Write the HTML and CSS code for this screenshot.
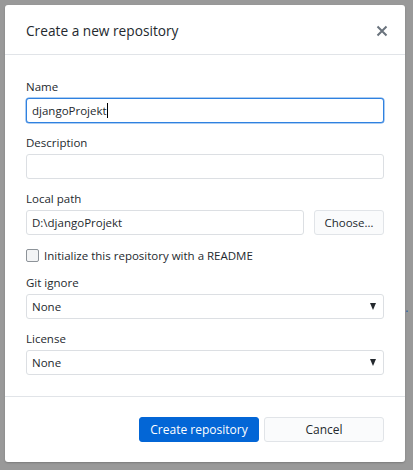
FILE: index.html
```html
<!DOCTYPE html>
<html>
<head>
<meta charset="utf-8">
<link rel="stylesheet" href="styles.css">
</head>
<body>
<div class="backdrop">
  <span class="peek">u.</span>
  <div class="dialog">
    <div class="header">
      <div class="title">Create a new repository</div>
      <svg class="close" width="12" height="12" viewBox="0 0 12 12"><path d="M1.5 1.5L10.5 10.5M10.5 1.5L1.5 10.5" stroke="#6a737d" stroke-width="2" stroke-linecap="butt"/></svg>
    </div>
    <div class="form">
      <div class="field first">
        <div class="label">Name</div>
        <div class="input focused"><span>djangoProjekt</span><span class="caret"></span></div>
      </div>
      <div class="field">
        <div class="label">Description</div>
        <div class="input"></div>
      </div>
      <div class="field">
        <div class="label">Local path</div>
        <div class="row">
          <div class="input grow">D:\djangoProjekt</div>
          <div class="btn choose">Choose…</div>
        </div>
      </div>
      <div class="check">
        <span class="box"></span>
        <span>Initialize this repository with a README</span>
      </div>
      <div class="field tight">
        <div class="label">Git ignore</div>
        <div class="input select"><span>None</span><span class="arrow"></span></div>
      </div>
      <div class="field">
        <div class="label">License</div>
        <div class="input select"><span>None</span><span class="arrow"></span></div>
      </div>
    </div>
    <div class="footer">
      <div class="btn primary">Create repository</div>
      <div class="btn cancel">Cancel</div>
    </div>
  </div>
</div>
</body>
</html>
```
FILE: styles.css
```css
html, body {
  margin: 0;
  padding: 0;
}
body {
  background: #999999;
  font-family: "Open Sans", "Noto Sans", sans-serif;
  color: #24292e;
  width: 413px;
  height: 470px;
  overflow: hidden;
}
.backdrop {
  position: relative;
  width: 413px;
  height: 470px;
  padding: 5px;
  box-sizing: border-box;
}
.dialog {
  position: relative;
  z-index: 1;
  width: 400px;
  height: 457px;
  background: #ffffff;
  border-radius: 3px;
  box-shadow: 0 1px 2px rgba(0,0,0,0.2);
  display: flex;
  flex-direction: column;
}
.header {
  border-bottom: 1px solid #e1e4e8;
  display: flex;
  align-items: center;
  justify-content: space-between;
  padding: 2px 17px 0 21px;
  height: 47px;
  flex: none;
}
.title {
  font-size: 13.7px;
  font-weight: 400;
  color: #24292e;
}
.close {
  display: block;
}
.form {
  padding: 24px 21px 0 21px;
  flex: 1;
  font-size: 11.5px;
}
.field {
  margin-top: 12px;
}
.field.first {
  margin-top: 0;
}
.field.tight {
  margin-top: 11px;
}
.label {
  line-height: 16px;
  height: 16px;
  margin-bottom: 3px;
  color: #24292e;
}
.input {
  height: 25px;
  box-sizing: border-box;
  border: 1px solid #dcdfe3;
  border-radius: 3px;
  padding: 0 5px;
  display: flex;
  align-items: center;
  line-height: 16px;
  color: #24292e;
  background: #fff;
}
.input.focused {
  border-color: #2f81e0;
  box-shadow: 0 0 0 0.5px #5b9be6;
}
.caret {
  display: inline-block;
  width: 1px;
  height: 15px;
  background: #000;
}
.row {
  display: flex;
  gap: 10px;
}
.grow {
  flex: 1;
}
.btn {
  height: 25px;
  box-sizing: border-box;
  border-radius: 3px;
  display: flex;
  align-items: center;
  justify-content: center;
  font-size: 11.5px;
}
.choose {
  width: 70px;
  border: 1px solid #e1e4e8;
  background: #fafbfc;
  color: #24292e;
}
.check {
  margin-top: 11px;
  height: 18px;
  display: flex;
  align-items: center;
  gap: 5px;
}
.box {
  width: 13px;
  height: 13px;
  box-sizing: border-box;
  border: 1px solid #8d9399;
  border-radius: 2px;
  background: #f3f4f5;
}
.select {
  justify-content: space-between;
  padding-right: 7px;
}
.arrow {
  width: 0;
  height: 0;
  border-left: 3.5px solid transparent;
  border-right: 3.5px solid transparent;
  border-top: 7px solid #24292e;
}
.footer {
  height: 66px;
  flex: none;
  box-sizing: border-box;
  border-top: 1px solid #e1e4e8;
  padding: 20px 21px 0 0;
  display: flex;
  justify-content: flex-end;
  gap: 5px;
}
.footer .btn {
  width: 120px;
  height: 25px;
  font-size: 12px;
}
.primary {
  background: #0366d6;
  color: #ffffff;
  border: 1px solid #0366d6;
}
.cancel {
  background: #fafbfc;
  border: 1px solid #e1e4e8;
  color: #24292e;
}
.peek {
  position: absolute;
  z-index: 0;
  left: 398px;
  top: 299px;
  font-size: 12px;
  color: #1f5fa8;
  font-family: "Open Sans", sans-serif;
}
```
